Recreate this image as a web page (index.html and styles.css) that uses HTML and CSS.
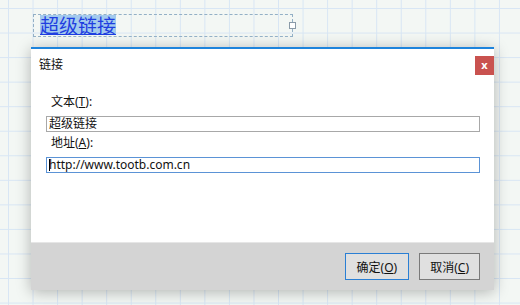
FILE: index.html
```html
<!DOCTYPE html>
<html lang="zh-CN">
<head>
<meta charset="UTF-8">
<title>链接</title>
<link rel="stylesheet" href="styles.css">
</head>
<body>
<div class="editor">
  <span class="link-text">超级链接</span>
  <span class="handle"></span>
</div>

<div class="dialog">
  <div class="dialog-title">
    <span>链接</span>
    <span class="close">x</span>
  </div>
  <div class="dialog-body">
    <div class="label">文本(<u>T</u>):</div>
    <div class="field">超级链接</div>
    <div class="label">地址(<u>A</u>):</div>
    <div class="field active"><span class="caret"></span>http://www.tootb.com.cn</div>
  </div>
  <div class="dialog-footer">
    <button class="btn primary">确定(<u>O</u>)</button>
    <button class="btn">取消(<u>C</u>)</button>
  </div>
</div>
</body>
</html>
```

FILE: styles.css
```css
body {
  margin: 0;
  padding-top: 14px;
  height: 305px;
  box-sizing: border-box;
  font-family: "Noto Sans", "Noto Sans CJK SC", sans-serif;
  font-size: 12px;
  color: #111;
  background-color: #f3f7f4;
  background-image:
    linear-gradient(to right, #d8e6f4 1px, transparent 1px),
    linear-gradient(to bottom, #d8e6f4 1px, transparent 1px);
  background-size: 24.55px 24.55px;
  background-position: 8px 8px;
  overflow: hidden;
}

/* 编辑区里被选中的链接 */
.editor {
  position: relative;
  margin-left: 33px;
  width: 260px;
  height: 23px;
  box-sizing: border-box;
  border: 1px dashed #93b0c6;
  padding-left: 6px;
}
.link-text {
  display: inline-block;
  font-family: "Noto Sans CJK SC", sans-serif;
  font-size: 19px;
  line-height: 20px;
  color: #1f3ee0;
  text-decoration: underline;
  background-color: #a3caee;
}
.handle {
  position: absolute;
  right: -4px;
  top: 7px;
  width: 5px;
  height: 5px;
  border: 1px solid #8a9aa8;
  background: #fff;
}

/* 对话框 */
.dialog {
  margin: 10px 0 0 31px;
  width: 463px;
  background: #fff;
  border-top: 2px solid #1e84dc;
  box-shadow: 0 2px 14px rgba(0,0,0,0.28);
}
.dialog-title {
  height: 33px;
  display: flex;
  justify-content: space-between;
  padding-left: 8px;
}
.dialog-title span:first-child {
  margin-top: 7px;
  font-family: "Noto Sans CJK SC", sans-serif;
  line-height: 16px;
}
.close {
  margin-top: 7px;
  width: 19px;
  height: 19px;
  line-height: 17px;
  text-align: center;
  background: #c9524f;
  color: #fff;
  font-weight: bold;
  font-size: 11px;
}
.dialog-body {
  height: 160px;
  box-sizing: border-box;
  padding: 9px 14px 0 15px;
}
.label {
  height: 16px;
  line-height: 16px;
  margin: 3px 0 6px;
  padding-left: 5px;
}
.field {
  height: 16px;
  box-sizing: border-box;
  border: 1px solid #a8a8a8;
  padding-left: 2px;
  line-height: 14px;
}
.field.active {
  border-color: #5b93d6;
}
.caret {
  display: inline-block;
  width: 1px;
  height: 12px;
  vertical-align: -2px;
  background: #000;
  margin-right: -1px;
}
.dialog-footer {
  height: 48px;
  box-sizing: border-box;
  border-top: 1px solid #e6e6e6;
  background: #d4d4d4;
  padding: 10px 14px 0 0;
  display: flex;
  justify-content: flex-end;
  gap: 10px;
}
.btn {
  height: 27px;
  padding: 0 10px;
  font-family: inherit;
  font-size: 12px;
  color: #111;
  background: #e0e0e0;
  border: 1px solid #7a7a7a;
}
.btn.primary {
  border-color: #2a7fd4;
  padding: 0 11px;
}
```
